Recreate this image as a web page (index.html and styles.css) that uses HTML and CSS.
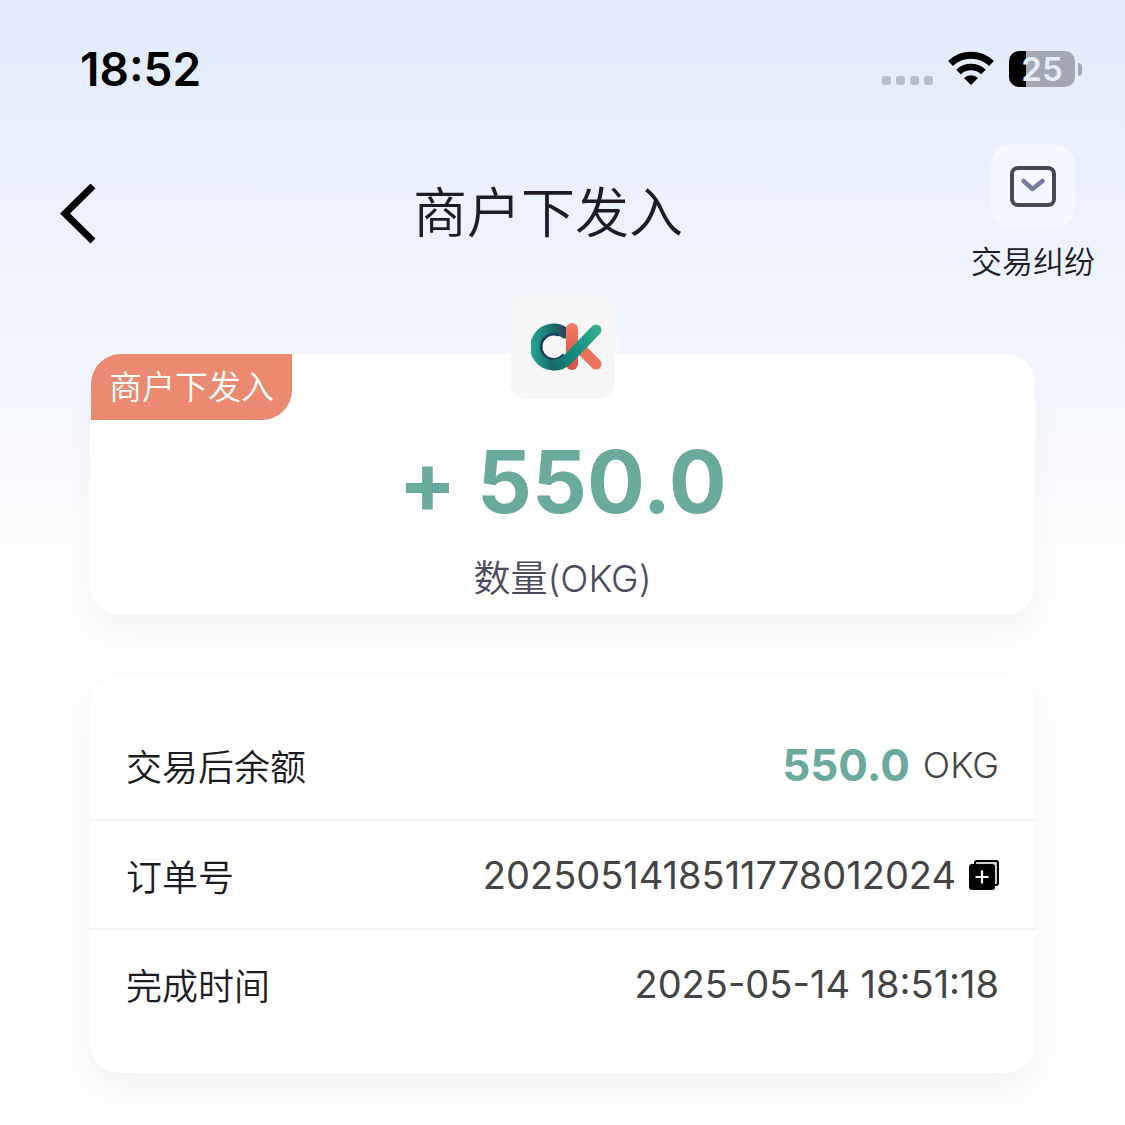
FILE: index.html
```html
<!DOCTYPE html>
<html lang="zh-CN">
<head>
    <meta charset="UTF-8">
    <meta name="viewport" content="width=device-width, initial-scale=1.0">
    <title>商户下发入</title>
    <link rel="stylesheet" href="styles.css">
</head>
<body>
    <div class="status-bar">
        <span class="clock">18:52</span>
        <div class="status-icons">
            <svg class="signal" width="52" height="36" viewBox="0 0 52 36" fill="#b6bdcb">
                <rect x="1" y="25" width="9" height="9" rx="3"/>
                <rect x="15" y="25" width="9" height="9" rx="3"/>
                <rect x="29" y="25" width="9" height="9" rx="3"/>
                <rect x="43" y="25" width="9" height="9" rx="3"/>
            </svg>
            <svg class="wifi" width="46" height="36" viewBox="0 0 46 36">
                <path d="M2.500 12.500 A29.500 29.500 0 0 1 43.500 12.500" fill="none" stroke="#000" stroke-width="7"/>
                <path d="M10.500 21 A18 18 0 0 1 35.500 21" fill="none" stroke="#000" stroke-width="6.500"/>
                <path d="M16 27 A10 10 0 0 1 30 27 L23 34 Z" fill="#000"/>
            </svg>
            <div class="battery">
                <span class="battery-body">25</span>
                <span class="battery-cap"></span>
            </div>
        </div>
    </div>

    <header class="header">
        <button class="back" aria-label="返回">
            <svg width="36" height="60" viewBox="0 0 36 60">
                <path d="M33 2 L5 29.500 L33 57" fill="none" stroke="#000" stroke-width="7"/>
            </svg>
        </button>
        <h1>商户下发入</h1>
        <a class="dispute" href="#">
            <span class="dispute-icon">
                <svg width="46" height="42" viewBox="0 0 46 42" fill="none">
                    <rect x="2" y="3" width="42" height="37" rx="6" stroke="#454955" stroke-width="4"/>
                    <path d="M13.500 16 L22.500 24 L32.500 16" stroke="#777a9f" stroke-width="4.500" stroke-linecap="round" stroke-linejoin="round"/>
                </svg>
            </span>
            交易纠纷
        </a>
    </header>

    <main>
        <section class="card amount-card">
            <span class="tag">商户下发入</span>
            <div class="logo">
                <svg width="72" height="50" viewBox="0 0 72 50" fill="none" stroke-linecap="round">
                    <defs>
                        <linearGradient id="teal" x1="22" y1="46" x2="66" y2="4" gradientUnits="userSpaceOnUse">
                            <stop offset="0" stop-color="#176c6a"/>
                            <stop offset=".4" stop-color="#148b7d"/>
                            <stop offset="1" stop-color="#35ae92"/>
                        </linearGradient>
                        <linearGradient id="ring" x1="0" y1="20" x2="38" y2="20" gradientUnits="userSpaceOnUse">
                            <stop offset="0" stop-color="#25a592"/>
                            <stop offset=".6" stop-color="#176c6a"/>
                            <stop offset="1" stop-color="#33395a"/>
                        </linearGradient>
                        <linearGradient id="coral" x1="0" y1="0" x2="0" y2="50" gradientUnits="userSpaceOnUse">
                            <stop offset="0" stop-color="#f47e66"/>
                            <stop offset="1" stop-color="#d94c3e"/>
                        </linearGradient>
                    </defs>
                    <path d="M34 11 A18 18 0 1 0 23 43" stroke="url(#ring)" stroke-width="11"/>
                    <path d="M27 13 A12.500 12.500 0 1 0 32 33" stroke="#14435a" stroke-width="2.500"/>
                    <path d="M41 7 V42" stroke="url(#coral)" stroke-width="12"/>
                    <path d="M52 29 L65 42" stroke="#ee725c" stroke-width="11"/>
                    <path d="M23 43 C29 43 33 41 37 37 L65 8" stroke="url(#teal)" stroke-width="11"/>
                </svg>
            </div>
            <p class="amount">+ 550.0</p>
            <p class="unit">数量(OKG)</p>
        </section>

        <dl class="card details">
            <div class="row">
                <dt>交易后余额</dt>
                <dd><strong>550.0</strong> <span class="currency">OKG</span></dd>
            </div>
            <div class="row">
                <dt>订单号</dt>
                <dd>
                    2025051418511778012024
                    <button class="copy" aria-label="复制">
                        <svg width="30" height="30" viewBox="0 0 30 30">
                            <rect x="6" y="1" width="23" height="24" rx="2" fill="#ccc" stroke="#000" stroke-width="2"/>
                            <rect x="0" y="4" width="26" height="26" rx="3" fill="#000"/>
                            <path d="M13 10.500 V23.500 M6.500 17 H19.500" stroke="#fff" stroke-width="2.200"/>
                        </svg>
                    </button>
                </dd>
            </div>
            <div class="row">
                <dt>完成时间</dt>
                <dd>2025-05-14 18:51:18</dd>
            </div>
        </dl>
    </main>
</body>
</html>
```

FILE: styles.css
```css
* {
    box-sizing: border-box;
}

body {
    margin: 0;
    min-height: 100vh;
    font-family: Inter, "Noto Sans CJK SC", sans-serif;
    font-weight: 350;
    color: #1c1c22;
    background: #fdfdfd linear-gradient(#e2ebfa 0, #e6eefc 100px, #ebf0fd 180px, #f1f5fe 330px, #fdfdfd 560px) no-repeat;
}

button {
    display: flex;
    padding: 0;
    border: none;
    background: none;
    cursor: pointer;
}

h1,
p,
dl,
dd {
    margin: 0;
}

.status-bar {
    display: flex;
    justify-content: space-between;
    align-items: center;
    height: 138px;
    padding: 0 43px 0 80px;
}

.clock {
    font-size: 46px;
    font-weight: 600;
    color: #000;
}

.status-icons {
    display: flex;
    align-items: center;
    gap: 15px;
}

.battery {
    display: flex;
    align-items: center;
    gap: 3px;
}

.battery-body {
    width: 66px;
    border-radius: 10px;
    background: linear-gradient(90deg, #000 17px, #a3a7b2 17px);
    color: #e6edfb;
    font-size: 33px;
    font-weight: 600;
    line-height: 36px;
    text-align: center;
}

.battery-cap {
    width: 4px;
    height: 13px;
    border-radius: 0 6px 6px 0;
    background: #a3a7b2;
}

.header {
    display: grid;
    grid-template-columns: 65px 1fr auto;
    align-items: center;
    padding: 6px 30px 0 60px;
}

.header h1 {
    font-size: 54px;
    font-weight: 350;
    line-height: 80px;
    text-align: center;
}

.dispute {
    display: flex;
    flex-direction: column;
    align-items: center;
    gap: 12px;
    color: inherit;
    font-size: 31px;
    line-height: 44px;
    text-decoration: none;
}

.dispute-icon {
    display: flex;
    align-items: center;
    justify-content: center;
    width: 84px;
    height: 84px;
    border-radius: 20px;
    background: #f3f7ff;
}

main {
    padding: 70px 90px 50px;
}

.card {
    border-radius: 30px;
    background: #fff;
    box-shadow: 0 15px 30px rgba(0, 0, 0, 0.04);
}

.amount-card {
    position: relative;
    padding: 82px 0 12px;
    text-align: center;
}

.tag {
    position: absolute;
    top: 0;
    left: 1px;
    padding: 0 18px;
    border-radius: 30px 0;
    background: #eb8971;
    color: #fff;
    font-size: 33px;
    line-height: 66px;
}

/* sits across the top edge of the card */
.logo {
    position: absolute;
    top: -60px;
    left: calc(50% - 53px);
    display: flex;
    align-items: center;
    justify-content: center;
    width: 105px;
    height: 105px;
    padding-left: 10px;
    border-radius: 18px;
    background: #f6f6f6;
}

.amount {
    color: #6aaa9c;
    font-size: 86px;
    font-weight: 700;
    font-variant-ligatures: no-contextual;
    line-height: 92px;
}

.unit {
    margin-top: 27px;
    color: #4b4b5e;
    font-size: 37px;
    line-height: 48px;
}

.details {
    margin-top: 61px;
    padding: 34px 0 36px;
}

.row {
    display: flex;
    justify-content: space-between;
    align-items: center;
    height: 109px;
    padding: 0 36px;
    font-size: 36px;
}

.row + .row {
    border-top: 2px solid #f3f3f4;
}

.row dd {
    display: flex;
    align-items: center;
    gap: 13px;
    color: #444;
    font-size: 38px;
    font-weight: 400;
}

.row strong {
    color: #6aaa9c;
    font-size: 44px;
    font-weight: 700;
}

.currency {
    font-size: 36px;
    font-weight: 300;
}
```
